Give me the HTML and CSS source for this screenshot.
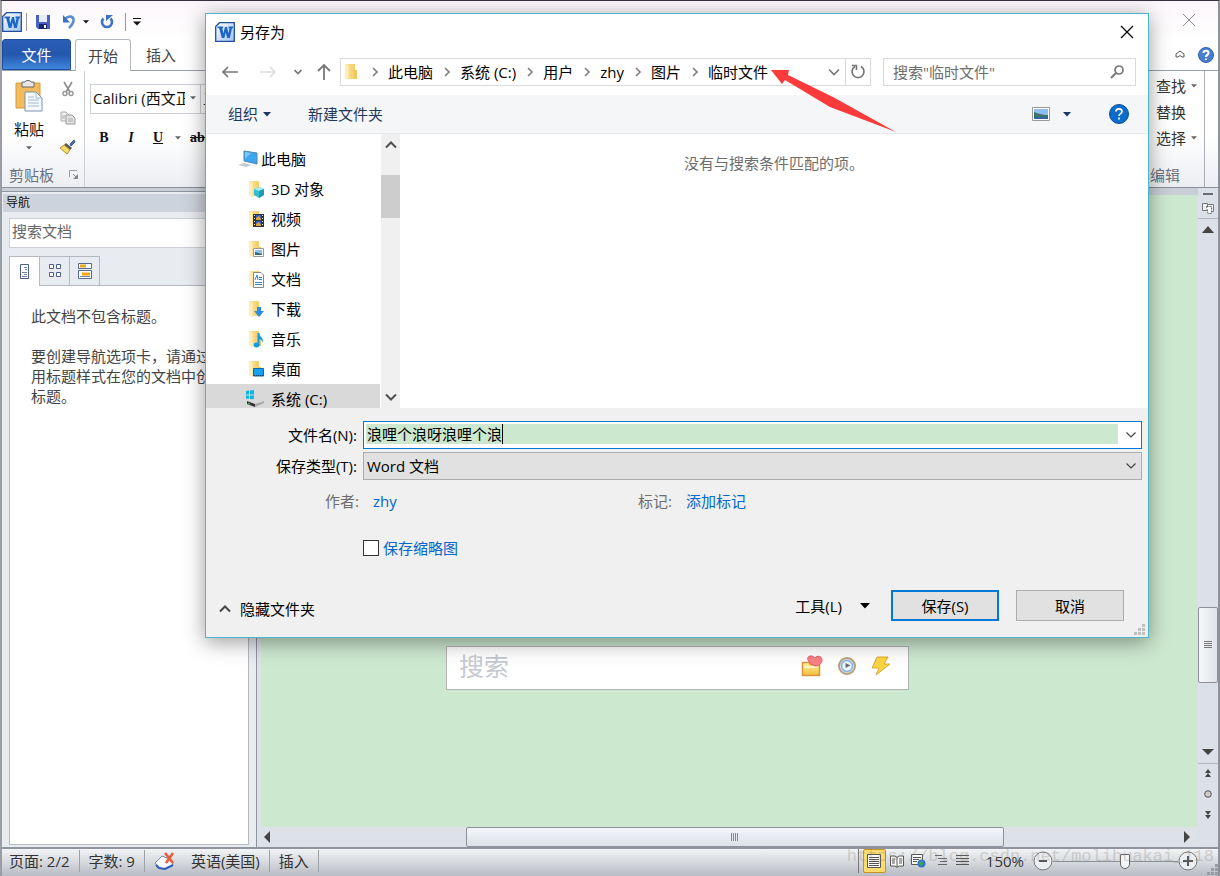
FILE: index.html
```html
<!DOCTYPE html>
<html lang="zh-CN">
<head>
<meta charset="utf-8">
<title>另存为</title>
<link rel="stylesheet" href="styles.css">
</head>
<body>
<svg class="defs" width="0" height="0" aria-hidden="true">
  <defs>
    <linearGradient id="gFolder" x1="0" x2="1"><stop offset="0" stop-color="#fde9a6"/><stop offset="1" stop-color="#f3cb63"/></linearGradient>
    <linearGradient id="gWord" x1="0" y1="0" x2="1" y2="1"><stop offset="0" stop-color="#ffffff"/><stop offset="1" stop-color="#9fc3ee"/></linearGradient>
    <linearGradient id="gGold" x1="0" y1="0" x2="0" y2="1"><stop offset="0" stop-color="#fff3a0"/><stop offset="1" stop-color="#f0bd3c"/></linearGradient>
    <symbol id="word" viewBox="0 0 20 20"><path d="M.7 4.5 4.500.7H19.300V19.300H.7Z" fill="url(#gWord)" stroke="#1f4f9c" stroke-width="1.300"/><path d="M2.500 4.500H8V6.300H7.300L8.300 11.500 10 5H12L13.500 11.500 14.500 6.300H13.500V4.500H18V6.300H17L14.800 16H12.200L10.800 10.500 9.300 16H6.800L4.200 6.300H2.500Z" fill="#1c66c6"/></symbol>
    <symbol id="folder" viewBox="0 0 16 18"><path d="M1 1H11V16H4L1 14Z" fill="url(#gFolder)"/><path d="M1 1 4.500 3V17.500L1 15.500Z" fill="#fdeebb"/><path d="M10 7H13V16H10Z" fill="#f0c75b"/></symbol>
    <symbol id="chev" viewBox="0 0 8 10"><path d="M2 1 6 5 2 9" fill="none" stroke="#808080" stroke-width="1.700"/></symbol>
    <symbol id="down" viewBox="0 0 12 8"><path d="M1 1.500 6 6.500 11 1.500" fill="none" stroke="currentColor" stroke-width="1.600"/></symbol>
    <symbol id="tri" viewBox="0 0 10 6"><path d="M0 0H10L5 5.500Z" fill="currentColor"/></symbol>
  </defs>
</svg>

<div class="app">
  <header class="quick">
    <svg class="i20" aria-label="Word"><use href="#word"/></svg>
    <span class="rule"></span>
    <button class="bare save" aria-label="保存"><svg width="16" height="16" viewBox="0 0 16 16"><path d="M1 1H15V15H3L1 13Z" fill="#4a5fc0"/><path d="M4 1H12V8H4Z" fill="#e6ecfa"/><path d="M4 10H12V15H4Z" fill="#182a6a"/><path d="M9 11H11V14H9Z" fill="#fff"/></svg></button>
    <button class="bare undo" aria-label="撤消"><svg width="16" height="16" viewBox="0 0 16 16"><path d="M4 5C8 1 13 2 12.500 7 12 10 10 12 8 14" fill="none" stroke="#5a8cd4" stroke-width="2.600"/><path d="M2 1V8.500H9Z" fill="#3c72c2"/></svg></button>
    <svg class="tri small" aria-hidden="true"><use href="#tri"/></svg>
    <button class="bare redo" aria-label="重复"><svg width="14" height="14" viewBox="0 0 14 14"><path d="M3.500 3.500A5 5 0 1 0 10.500 3.500" fill="none" stroke="#3f72c6" stroke-width="2.600"/><path d="M6 6V0H13Z" fill="#3f72c6"/></svg></button>
    <span class="rule"></span>
    <svg width="8" height="10" viewBox="0 0 8 10"><path d="M0 1.500H8" stroke="#111"/><path d="M0 4.500H8L4 8.500Z" fill="#111"/></svg>
    <button class="bare winclose" aria-label="关闭"><svg width="14" height="14" viewBox="0 0 14 14"><path d="M1 1 13 13M13 1 1 13" stroke="#8c8c8c"/></svg></button>
  </header>

  <div class="tabs">
    <button class="file">文件</button>
    <button class="tab on">开始</button>
    <button class="tab">插入</button>
    <button class="tab">页面布局</button>
    <span class="tabtools">
      <svg width="10" height="9" viewBox="0 0 10 9"><path d="M1 4 5 1 9 4V7H7L5 5.500 3 7H1Z" fill="#fff" stroke="#555"/></svg>
      <svg width="16" height="16" viewBox="0 0 16 16"><circle cx="8" cy="8" r="7.500" fill="#4a7fd0" stroke="#2f62b3"/><path d="M5.500 6C5.500 3 10.500 3 10.500 6 10.500 8 8 7.800 8 10M8 11.500V13" fill="none" stroke="#fff" stroke-width="2"/></svg>
    </span>
  </div>

  <div class="ribbon">
    <section class="clip">
      <div class="cliprow">
        <button class="bare paste"><svg width="30" height="32" viewBox="0 0 30 32"><path d="M2 3H26V28H2Z" fill="#f2bc5c" stroke="#d49b3c"/><path d="M8 2H11C11 0 17 0 17 2H20V7H8Z" fill="#e6e6e6" stroke="#666"/><path d="M11 12H22L28 18V31H11Z" fill="#f7fbff" stroke="#7891af"/><path d="M22 12V18H28M14 17H20M14 20H25M14 23H25M14 26H25" fill="none" stroke="#9fb6d2"/></svg><span>粘贴</span><svg class="tri small grey"><use href="#tri"/></svg></button>
        <div class="cliptools">
          <button class="bare" aria-label="剪切"><svg width="12" height="16" viewBox="0 0 12 16"><path d="M2 1 8 11M10 1 4 11" stroke="#8c8c8c" stroke-width="1.600"/><circle cx="3" cy="12.500" r="2" fill="none" stroke="#999" stroke-width="1.500"/><circle cx="9" cy="12.500" r="2" fill="none" stroke="#999" stroke-width="1.500"/></svg></button>
          <button class="bare" aria-label="复制"><svg width="16" height="14" viewBox="0 0 16 14"><path d="M1 1H6L9 4V10H1Z" fill="#eee" stroke="#aaa"/><path d="M6 4H12L15 7V13H6Z" fill="#e4e4e4" stroke="#999"/><path d="M8 8H13M8 10H13M2 5H5M2 7H5" stroke="#aaa"/></svg></button>
          <button class="bare" aria-label="格式刷"><svg width="17" height="16" viewBox="0 0 17 16"><path d="M11 5 15 1 16 3 12 7Z" fill="#4c70b4" stroke="#35549a"/><path d="M7 4 13 9 11 11 5 6Z" fill="#555"/><path d="M5 6 11 11 8 15 1 9Z" fill="#f8dd6c" stroke="#b48b2c"/></svg></button>
        </div>
      </div>
      <div class="glabel"><span>剪贴板</span><svg width="10" height="10" viewBox="0 0 10 10"><path d="M.5 7V.5H8" fill="none" stroke="#999"/><path d="M4 4 7 7" stroke="#888"/><path d="M9 4V9H4Z" fill="#888"/></svg></div>
    </section>
    <section class="font">
      <div class="fontrow"><button class="combo"><span>Calibri (西文正文)</span><svg class="tri small grey"><use href="#tri"/></svg></button><button class="combo size"><span>五号</span></button></div>
      <div class="fmt"><button class="bare"><b>B</b></button><button class="bare"><i>I</i></button><button class="bare"><u>U</u></button><svg class="tri small grey"><use href="#tri"/></svg><button class="bare strike"><s>abc</s></button></div>
    </section>
    <section class="edit">
      <button class="bare">查找<svg class="tri small grey"><use href="#tri"/></svg></button>
      <button class="bare">替换</button>
      <button class="bare">选择<svg class="tri small grey"><use href="#tri"/></svg></button>
      <span class="glabel">编辑</span>
    </section>
  </div>

  <div class="work">
    <aside class="pane">
      <h2>导航</h2>
      <input class="find" type="text" placeholder="搜索文档" aria-label="搜索文档">
      <div class="ptabs">
        <button class="on" aria-label="浏览标题"><svg width="10" height="16" viewBox="0 0 10 16"><path d="M.5.5H8.500V14.500H.5Z" fill="#fff" stroke="#4c5f80"/><path d="M4 3.500H7M5 5.500H7M2 8.500H7M4 10.500H7M2 12.500H7" stroke="#7283a0"/></svg></button>
        <button aria-label="浏览页面"><svg width="14" height="16" viewBox="0 0 14 16"><path d="M1.500 1.500H5.500V5.500H1.500ZM8.500 1.500H12.500V5.500H8.500ZM1.500 9.500H5.500V13.500H1.500ZM8.500 9.500H12.500V13.500H8.500Z" fill="#fff" stroke="#49618c"/></svg></button>
        <button aria-label="浏览搜索结果"><svg width="14" height="16" viewBox="0 0 14 16"><path d="M.5.5H13.500V5.500H.5ZM.5 7.500H13.500V15.500H.5Z" fill="#fff" stroke="#566b90"/><path d="M2 3H8M4 11H12" stroke="#f3a81c" stroke-width="3"/><path d="M2 13.500H12" stroke="#7283a0"/></svg></button>
      </div>
      <div class="ptext"><p>此文档不包含标题。</p><p>要创建导航选项卡，请通过应用标题样式在您的文档中创建标题。</p></div>
    </aside>
    <div class="center">
      <main class="canvas">
        <div class="docsearch"><span>搜索</span>
          <svg width="22" height="22" viewBox="0 0 22 22"><path d="M1.500 7.500H8L9.500 9.500H18.500V20.500H1.500Z" fill="url(#gGold)" stroke="#dc9440" stroke-width="1.500"/><path d="M3 12H17" stroke="#fff5c2" stroke-width="2"/><path d="M14 11C8 9 4 2 9 1 12 .5 13 2 14 3 16 0 21 1 21 5 21 9 17 11 14 11Z" fill="#f98085" stroke="#e35b66"/></svg>
          <svg width="20" height="20" viewBox="0 0 20 20"><circle cx="10" cy="10" r="8" fill="#dbe9fb" stroke="#b6a078" stroke-width="2"/><circle cx="10" cy="10" r="5.500" fill="#f2f8ff" stroke="#8db4ea" stroke-width="1.600"/><path d="M8.500 7 13.500 9.500 8.500 12Z" fill="#5c6d80"/></svg>
          <svg width="20" height="20" viewBox="0 0 20 20"><path d="M6 1H17L13 8H19L5 19 8 12H1Z" fill="#f9d443" stroke="#dfa736"/></svg>
        </div>
      </main>
      <div class="hscroll"><svg width="8" height="12" viewBox="0 0 8 12"><path d="M7 0V12L1 6Z" fill="#444"/></svg><span class="h1"></span><span class="hthumb"><svg width="8" height="8" viewBox="0 0 8 8"><path d="M.5 0V8M2.500 0V8M4.500 0V8M6.500 0V8" stroke="#888"/></svg></span><span class="h2"></span><svg width="8" height="12" viewBox="0 0 8 12"><path d="M1 0V12L7 6Z" fill="#444"/></svg></div>
    </div>
    <div class="vscroll">
      <div class="vtop"><span class="split"></span><svg width="12" height="12" viewBox="0 0 12 12"><path d="M.5 1.500H5.500V8.500H.5ZM5.500 2.500H11.500V9.500H5.500Z" fill="#eef1f6" stroke="#777"/><path d="M4.500 4.500H9.500V11.500H6Z" fill="#fff" stroke="#666" stroke-dasharray="2 1"/></svg></div>
      <svg class="vup" width="12" height="7" viewBox="0 0 12 7"><path d="M0 7 6 0 12 7Z" fill="#444"/></svg>
      <span class="v1"></span><span class="vthumb"><svg width="8" height="8" viewBox="0 0 8 8"><path d="M0 .5H8M0 2.500H8M0 4.500H8M0 6.500H8" stroke="#777"/></svg></span><span class="v2"></span>
      <svg class="vdown" width="12" height="7" viewBox="0 0 12 7"><path d="M0 0 6 6 12 0Z" fill="#444"/></svg>
      <div class="vbot">
        <svg width="8" height="8" viewBox="0 0 8 8"><path d="M1 4 4 0 7 4ZM1 8 4 4 7 8Z" fill="#444"/></svg>
        <svg width="8" height="8" viewBox="0 0 8 8"><circle cx="4" cy="4" r="3.300" fill="#ccc" stroke="#555"/></svg>
        <svg width="8" height="8" viewBox="0 0 8 8"><path d="M1 0H7L4 4ZM1 4H7L4 8Z" fill="#444"/></svg>
      </div>
    </div>
  </div>

  <footer class="status">
    <span class="cell">页面: 2/2</span><span class="cell">字数: 9</span>
    <span class="cell lang"><svg width="22" height="20" viewBox="0 0 22 20"><path d="M1 12 8 5 18 9 19 14 11 18 5 17Z" fill="#f7f9fd" stroke="#7d8ba5"/><path d="M2 14 5 17 11 18 19 14" fill="none" stroke="#2f5cb8" stroke-width="2"/><path d="M11 2 19 12M19 2 12 12" stroke="#ee5a3c" stroke-width="2.500"/></svg>英语(美国)</span>
    <span class="cell">插入</span>
    <span class="views">
      <button class="vw on" aria-label="页面视图"><svg width="14" height="14" viewBox="0 0 14 14"><path d="M.5.5H13.500V13.500H.5Z" fill="#fff" stroke="#555"/><path d="M2 3.500H12M2 5.500H12M2 7.500H12M2 9.500H12M2 11.500H12" stroke="#555"/></svg></button>
      <button class="vw" aria-label="阅读版式"><svg width="14" height="13" viewBox="0 0 14 13"><path d="M.5 1H5L7 2.500 9 1H13.500V11H9L7 12.500 5 11H.5Z" fill="#fff" stroke="#555"/><path d="M7 2V12M2 4H5M2 6H5M2 8H5M9 4H12M9 6H12M9 8H12" stroke="#555"/></svg></button>
      <button class="vw" aria-label="Web 版式"><svg width="15" height="14" viewBox="0 0 15 14"><path d="M.5.5H11.500V10.500H.5Z" fill="#fff" stroke="#555"/><path d="M2 3.500H10M2 5.500H8M2 7.500H6" stroke="#555"/><circle cx="10.500" cy="9.500" r="4" fill="#2f78c8"/><path d="M8 8 11 7 12 10 9 12Z" fill="#47a447"/></svg></button>
      <button class="vw" aria-label="大纲"><svg width="12" height="12" viewBox="0 0 12 12"><path d="M0 .5H7M3 3.500H12M5 6.500H12M3 9.500H12" stroke="#666"/></svg></button>
      <button class="vw" aria-label="草稿"><svg width="13" height="12" viewBox="0 0 13 12"><path d="M0 .5H13M0 3.500H13M0 6.500H13M0 9.500H13" stroke="#555"/></svg></button>
    </span>
    <span class="pct">150%</span>
    <button class="rnd" aria-label="缩小"><svg width="20" height="20" viewBox="0 0 20 20"><circle cx="10" cy="10" r="9" fill="#eceef1" stroke="#777"/><path d="M6 10H14" stroke="#555" stroke-width="2"/></svg></button>
    <input class="zoom" type="range" min="0" max="100" value="58" aria-label="缩放">
    <button class="rnd" aria-label="放大"><svg width="20" height="20" viewBox="0 0 20 20"><circle cx="10" cy="10" r="9" fill="#eceef1" stroke="#777"/><path d="M5 10H15M10 5V15" stroke="#555" stroke-width="2"/></svg></button>
    <svg class="grip" width="12" height="12" viewBox="0 0 12 12"><path d="M9 0H12V3H9ZM5 4H8V7H5ZM9 4H12V7H9ZM1 8H4V11H1ZM5 8H8V11H5ZM9 8H12V11H9Z" fill="#969ba5"/></svg>
    <span class="mark">https://blog.csdn.net/molihuakai_118</span>
  </footer>
</div>

<div class="dialog" role="dialog" aria-label="另存为">
  <div class="dtitle"><svg class="i20"><use href="#word"/></svg><h1>另存为</h1><button class="bare" aria-label="关闭"><svg width="14" height="14" viewBox="0 0 14 14"><path d="M1 1 13 13M13 1 1 13" stroke="#000" stroke-width="1.200"/></svg></button></div>
  <div class="dnav">
    <button class="bare" aria-label="后退"><svg width="16" height="12" viewBox="0 0 16 12"><path d="M16 6H1M6 1 1 6 6 11" fill="none" stroke="#777" stroke-width="1.700"/></svg></button>
    <button class="bare fwd" aria-label="前进"><svg width="16" height="12" viewBox="0 0 16 12"><path d="M0 6H15M10 1 15 6 10 11" fill="none" stroke="#ddd" stroke-width="1.700"/></svg></button>
    <button class="bare" aria-label="最近位置"><svg width="8" height="6" viewBox="0 0 8 6"><path d="M.5 1 4 4.500 7.500 1" fill="none" stroke="#777" stroke-width="1.700"/></svg></button>
    <button class="bare up" aria-label="上移"><svg width="14" height="16" viewBox="0 0 14 16"><path d="M7 16V1M1 7 7 1 13 7" fill="none" stroke="#777" stroke-width="1.800"/></svg></button>
    <div class="addr">
      <svg class="fold"><use href="#folder"/></svg>
      <svg class="ch"><use href="#chev"/></svg><span>此电脑</span>
      <svg class="ch"><use href="#chev"/></svg><span>系统 (C:)</span>
      <svg class="ch"><use href="#chev"/></svg><span>用户</span>
      <svg class="ch"><use href="#chev"/></svg><span>zhy</span>
      <svg class="ch"><use href="#chev"/></svg><span>图片</span>
      <svg class="ch"><use href="#chev"/></svg><span>临时文件</span>
      <button class="bare drop" aria-label="以前的位置"><svg width="12" height="8" color="#777"><use href="#down"/></svg></button>
      <button class="bare refresh" aria-label="刷新"><svg width="16" height="16" viewBox="0 0 16 16"><path d="M11 2.500A6 6 0 1 1 5 2.500" fill="none" stroke="#777" stroke-width="1.700"/><path d="M2 1.500H6.500V6" fill="none" stroke="#777" stroke-width="1.600"/></svg></button>
    </div>
    <div class="search"><input type="text" placeholder='搜索"临时文件"' aria-label="搜索"><svg width="14" height="14" viewBox="0 0 14 14"><circle cx="9" cy="5" r="4" fill="none" stroke="#777" stroke-width="1.700"/><path d="M6 8 1 13" stroke="#777" stroke-width="2"/></svg></div>
  </div>
  <div class="dbar">
    <button class="bare">组织<svg class="tri" width="8" height="5"><use href="#tri"/></svg></button>
    <button class="bare newf">新建文件夹</button>
    <button class="bare view" aria-label="更改视图"><svg width="18" height="14" viewBox="0 0 18 14"><path d="M.5.5H17.500V13.500H.5Z" fill="#fff" stroke="#999"/><path d="M2 2H16V12H2Z" fill="#8dbdf4"/><path d="M2 5C6 6 9 8 16 8V12H2Z" fill="#3d7468"/><path d="M2 10H16V12H2Z" fill="#2f66a0"/></svg><svg class="tri" width="8" height="5"><use href="#tri"/></svg></button>
    <button class="bare" aria-label="帮助"><svg width="20" height="20" viewBox="0 0 20 20"><circle cx="10" cy="10" r="9.500" fill="#0a6ccb" stroke="#0b4f93"/><path d="M7 7.500C7 4 13 4 13 7.500 13 9.800 10 9.500 10 12M10 13.500V15.500" fill="none" stroke="#fff" stroke-width="1.700"/></svg></button>
  </div>
  <div class="dbody">
    <ul class="tree">
      <li class="root"><svg width="20" height="18" viewBox="0 0 20 18"><path d="M6 1 19 3V14L6 11Z" fill="#3ba5ee" stroke="#5484a8"/><path d="M7 2 13 3 7 9Z" fill="#7cc8fa"/><path d="M0 15 6 13 14 15 8 17Z" fill="#c5cbd1"/></svg>此电脑</li>
      <li><svg class="fi" viewBox="0 0 16 18"><use href="#folder"/><path d="M6 9 11 7 16 9V15L11 18 6 15Z" fill="#35bcd8"/><path d="M6 9 11 11 16 9 11 7Z" fill="#a5edf5"/><path d="M11 11 16 9V15L11 18Z" fill="#199db9"/></svg>3D 对象</li>
      <li><svg class="fi" viewBox="0 0 16 18"><use href="#folder"/><path d="M5 4H16V17H5Z" fill="#333"/><path d="M8 5H13V10H8ZM8 11H13V16H8Z" fill="#375fc6"/><path d="M8 8 11 6 13 9V10H8ZM8 14 11 12 13 15V16H8Z" fill="#d8a53b"/><path d="M6.500 5V17M14.500 5V17" stroke="#fff" stroke-dasharray="1 2"/></svg>视频</li>
      <li><svg class="fi" viewBox="0 0 16 18"><use href="#folder"/><path d="M5.500 8.500H15.500V16.500H5.500Z" fill="#fff" stroke="#999"/><path d="M7 10H14V15H7Z" fill="#8fc3ef"/><path d="M7 12 14 14V15H7Z" fill="#306a72"/></svg>图片</li>
      <li><svg class="fi" viewBox="0 0 16 18"><use href="#folder"/><path d="M5.500 2.500H13L15.500 5V17.500H5.500Z" fill="#fff" stroke="#888"/><path d="M7 10 9 5 10 10M11 7.500H14M11 9.500H14M7 12.500H14M7 14.500H14" fill="none" stroke="#3486c5"/></svg>文档</li>
      <li><svg class="fi" viewBox="0 0 16 18"><use href="#folder"/><path d="M9 7H13V11H16L11 17 6 11H9Z" fill="#2f8be0"/></svg>下载</li>
      <li><svg class="fi" viewBox="0 0 16 18"><use href="#folder"/><path d="M10.500 3V15" stroke="#109be9" stroke-width="2"/><path d="M11 3C11 7 16 7 15 13 14 9 11 9 11 9Z" fill="#109be9"/><ellipse cx="8.500" cy="15" rx="3" ry="2.500" fill="#109be9"/></svg>音乐</li>
      <li><svg class="fi" viewBox="0 0 16 18"><use href="#folder"/><path d="M5.500 8.500H15.500V16H5.500Z" fill="#14a2f4" stroke="#0d67a8"/><path d="M6 15.500H15" stroke="#0b416d" stroke-dasharray="1 1"/></svg>桌面</li>
      <li class="sel"><svg width="20" height="18" viewBox="0 0 20 18"><path d="M1 1 4 .5V4.500H1ZM5 .5 9 0V4.500H5ZM1 5.500H4V9L1 8.500ZM5 5.500H9V10L5 9Z" fill="#0cb4ee"/><path d="M2 11 11 8 19 11 10 14Z" fill="#d7d9dc"/><path d="M2 11 10 14V17L2 14Z" fill="#333"/><path d="M10 14 19 11V13L10 17Z" fill="#aaa"/><path d="M3 13 5 14" stroke="#38d45c"/></svg>系统 (C:)</li>
    </ul>
    <div class="tscroll"><svg width="12" height="8" viewBox="0 0 12 8"><path d="M1 6.500 6 1.500 11 6.500" fill="none" stroke="#505050" stroke-width="2"/></svg><span></span><svg width="12" height="8" viewBox="0 0 12 8"><path d="M1 1.500 6 6.500 11 1.500" fill="none" stroke="#505050" stroke-width="2"/></svg></div>
    <div class="list">没有与搜索条件匹配的项。</div>
  </div>
  <form class="dform">
    <label for="fname">文件名(N):</label>
    <div class="name"><input id="fname" type="text" value="浪哩个浪呀浪哩个浪"><span class="caret"></span><svg width="12" height="8" viewBox="0 0 12 8"><path d="M1.500 1.500 6 6 10.500 1.500" fill="none" stroke="#444" stroke-width="1.200"/></svg></div>
    <label for="ftype">保存类型(T):</label>
    <div class="type"><select id="ftype"><option>Word 文档</option></select><svg width="12" height="8" viewBox="0 0 12 8"><path d="M1.500 1.500 6 6 10.500 1.500" fill="none" stroke="#444" stroke-width="1.200"/></svg></div>
    <span class="meta">作者:</span>
    <div class="metas"><a href="#">zhy</a><span class="meta">标记:</span><a href="#">添加标记</a></div>
    <label class="thumb"><input type="checkbox">保存缩略图</label>
  </form>
  <div class="dfoot">
    <button class="bare hide"><svg width="12" height="8" viewBox="0 0 12 8"><path d="M1 6.500 6 1.500 11 6.500" fill="none" stroke="#444" stroke-width="2"/></svg>隐藏文件夹</button>
    <button class="bare tools">工具(L)<svg class="tri wide"><use href="#tri"/></svg></button>
    <button class="btn primary">保存(S)</button>
    <button class="btn">取消</button>
  </div>
  <svg class="dgrip" width="12" height="12" viewBox="0 0 12 12"><path d="M8 0H11V3H8ZM4 4H7V7H4ZM8 4H11V7H8ZM0 8H3V11H0ZM4 8H7V11H4ZM8 8H11V11H8Z" fill="#bfbfbf"/></svg>
  <svg class="arrow" width="128" height="64" viewBox="0 0 128 64"><path d="M1 0 19 0 18 5 63 27 126 62 60 37 15 10 12 14Z" fill="#fb3b3b"/></svg>
</div>
</body>
</html>
```
FILE: styles.css
```css
* { box-sizing: border-box; }
body { margin: 0; font: 15px/20px "Open Sans", "Noto Sans CJK SC", sans-serif; color: #111; overflow: hidden; }
svg { display: block; flex: none; }
button, input, select { font: inherit; color: inherit; }
h1, h2, p, ul { margin: 0; padding: 0; font-weight: 400; }
.defs { position: absolute; }
.bare { background: none; border: 0; padding: 0; display: flex; align-items: center; white-space: nowrap; }
.i20 { width: 20px; height: 20px; }
.tri { width: 8px; height: 5px; }
.tri.small { width: 6px; height: 4px; }
.tri.wide { width: 10px; height: 6px; }
.grey { color: #666; }

.app { height: 100vh; display: flex; flex-direction: column; border-top: 1px solid #35303f; border-left: 2px solid #9a9da3; border-right: 2px solid #8f9299; background: #fff; }
.quick { flex: none; height: 38px; display: flex; align-items: center; gap: 8px; padding: 4px 22px 0 0; background: linear-gradient(#fbf6fa, #fff); }
.quick .rule { width: 1px; height: 18px; background: #999; margin: 0 -1px 0 -4px; }
.quick .save { margin-left: 1px; }
.quick .undo { margin-left: 2px; }
.quick .undo + .tri { margin-left: -2px; }
.quick .redo { margin: 0 7px 0 3px; }
.winclose { margin: -4px 0 0 auto; }
.tabs { flex: none; height: 32px; display: flex; align-items: stretch; border-bottom: 1px solid #999fab; }
.tabs button { border: 0; padding: 0; background: none; color: #444; }
.tabs .file { width: 69px; background: linear-gradient(#2b5fb8, #2458ad 50%, #3f86de); border: 1px solid #1f4d9c; border-radius: 3px 3px 0 0; color: #fff; }
.tabs .tab { padding: 0 15px; }
.tabs .on { margin: 0 0 -1px 4px; padding: 0 12px; background: #fff; border: 1px solid #b4b8c0; border-bottom: 0; border-radius: 3px 3px 0 0; }
.tabtools { margin-left: auto; display: flex; align-items: center; gap: 13px; padding-right: 4px; }

.ribbon { flex: none; height: 117px; display: flex; background: linear-gradient(#fff 55%, #eceef2); border-bottom: 1px solid #898e98; }
.clip { width: 83px; display: flex; flex-direction: column; border-right: 1px solid #ccd0d6; }
.cliprow { flex: 1; display: flex; padding: 9px 8px 0 12px; justify-content: space-between; }
.paste { flex-direction: column; gap: 7px; align-self: flex-start; }
.cliptools { display: flex; flex-direction: column; align-items: center; gap: 14px; padding-top: 1px; }
.glabel { display: flex; align-items: center; color: #6a717d; gap: 15px; padding: 0 0 2px 7px; }
.font { padding: 13px 0 0 5px; }
.fontrow { display: flex; }
.combo { width: 111px; height: 30px; display: flex; align-items: center; background: #fff; border: 1px solid #ccd0d6; padding: 0 4px 3px 2px; text-align: left; gap: 5px; }
.combo span { flex: 1; overflow: hidden; white-space: nowrap; }
.combo.size { width: 50px; border-left: 0; }
.fmt { display: flex; align-items: center; gap: 11px; padding: 14px 0 0 8px; font: 14px/20px "Liberation Serif", serif; }
.fmt .bare { min-width: 12px; justify-content: center; font-weight: 700; }
.fmt .bare + .bare { margin-left: 4px; }
.fmt .strike { margin-left: -2px; }
.edit { margin-left: auto; width: 57px; margin-right: 13px; border-right: 1px solid #a9aeb8; padding-top: 5px; display: flex; flex-direction: column; gap: 6px; }
.edit .bare { padding-left: 8px; gap: 5px; color: #333; }
.edit .glabel { margin-top: auto; padding-left: 2px; }

.work { flex: 1; min-height: 0; display: flex; background: #c9ced7; border-bottom: 2px solid #8f949e; }
.pane { width: 255px; margin-top: 3px; flex: none; display: flex; flex-direction: column; background: #e8ebf0; border: 1px solid #8f949e; border-width: 1px 1px 0 0; padding: 2px 7px 2px; }
.pane h2 { margin: 0 -6px; padding-left: 3px; background: #cdd3dc; font-size: 12px; line-height: 18px; }
.find { margin: 6px 0 8px; height: 30px; border: 1px solid #ccd0d6; padding: 0 2px 4px; background: #fff; }
.find::placeholder { color: #666; opacity: 1; }
.ptabs { display: flex; border-bottom: 1px solid #b3b8c1; height: 30px; }
.ptabs button { width: 30px; padding: 0; display: flex; align-items: center; justify-content: center; border: 1px solid #b3b8c1; border-left: 0; border-bottom: 0; background: #e8ebf0; }
.ptabs .on { width: 31px; height: 30px; border-left: 1px solid #b3b8c1; background: #fff; }
.ptext { flex: 1; background: #fff; border: 1px solid #b3b8c1; border-top: 0; padding: 20px 12px 0 21px; color: #444; }
.ptext p { margin-bottom: 20px; }
.center { flex: 1; min-width: 0; display: flex; flex-direction: column; padding-top: 7px; border-left: 4px solid #dde1e8; }
.canvas { flex: 1; min-height: 0; background: #cce8cf; padding: 451px 289px 0 185px; }
.docsearch { height: 44px; background: #fff; border: 1px solid #b3b3b3; display: flex; align-items: center; gap: 14px; padding: 0 17px 4px 12px; }
.docsearch span { flex: 1; font-size: 25px; line-height: 30px; color: #c5c9d1; }
.hscroll { height: 20px; display: flex; align-items: center; background: #dde1e8; padding: 0 7px 0 2px; gap: 7px; }
.h1 { flex: 182; } .h2 { flex: 166; }
.hthumb { flex: 538; height: 20px; border: 1px solid #8c919b; border-radius: 2px; background: linear-gradient(#f3f5f8, #dde1e8); display: flex; align-items: center; justify-content: center; }
.vscroll { width: 20px; flex: none; display: flex; flex-direction: column; align-items: center; background: #dce0e8; padding-top: 5px; }
.vtop { width: 100%; display: flex; flex-direction: column; align-items: center; gap: 7px; height: 26px; border-bottom: 1px solid #b1b6c0; }
.split { width: 10px; height: 2px; background: #666c78; }
.vup { margin: 7px 0; }
.v1 { flex: 368; } .v2 { flex: 59; }
.vthumb { flex: 74; width: 20px; border: 1px solid #8c919b; border-radius: 2px; background: linear-gradient(90deg, #f6f7fa, #dfe3ea); display: flex; align-items: center; justify-content: center; }
.vdown { margin: 7px 0; }
.vbot { width: 100%; height: 84px; border-top: 1px solid #b1b6c0; padding-top: 5px; display: flex; flex-direction: column; align-items: center; gap: 13px; }

.status { position: relative; flex: none; height: 27px; display: flex; align-items: center; padding-bottom: 3px; background: linear-gradient(#f2f4f6, #b8bcc3); color: #333; white-space: nowrap; }
.cell { display: flex; align-items: center; gap: 15px; height: 22px; padding: 0 9px; border-right: 1px solid #9ba0a9; }
.cell:first-child { padding-left: 7px; }
.views { margin-left: auto; display: flex; align-items: center; height: 24px; border-left: 1px solid #777; padding-left: 4px; }
.vw { width: 22px; height: 22px; padding: 0; display: flex; align-items: center; justify-content: center; border: 0; background: none; }
.vw.on { height: 24px; width: 23px; border: 1px solid #c99320; border-radius: 2px; background: #fddc6e; }
.pct { margin: 0 9px 0 12px; }
.rnd { border: 0; background: none; padding: 0; }
.zoom { appearance: none; width: 125px; height: 20px; margin: 0; background: linear-gradient(#8a8f98, #8a8f98) center / 100% 1px no-repeat; }
.zoom::-webkit-slider-thumb { appearance: none; width: 10px; height: 15px; border: 1px solid #666; border-radius: 1px 1px 5px 5px; background: #f4f5f7; }
.grip { margin: 0 0 -3px 8px; align-self: flex-end; }
.mark { position: absolute; right: 4px; top: -2px; font: 17px/20px "Liberation Mono", monospace; color: #8a8676; opacity: 0.3; pointer-events: none; }

.dialog { position: absolute; left: 205px; right: 71px; top: 13px; border: 1px solid #4ab6c9; background: #f0f0f0; box-shadow: 0 4px 20px rgba(0, 0, 0, 0.4); color: #000; }
.dtitle { display: flex; align-items: center; gap: 5px; height: 36px; padding: 0 14px 0 9px; background: #fff; }
.dtitle h1 { flex: 1; font-size: 15px; }
.dnav { display: flex; align-items: center; height: 45px; padding: 0 12px 1px 16px; background: #fff; }
.dnav .fwd { margin: 0 18px 0 22px; }
.dnav .up { margin: 0 9px 0 15px; }
.addr { flex: 1; min-width: 0; height: 28px; border: 1px solid #d9d9d9; display: flex; align-items: center; white-space: nowrap; }
.fold { width: 16px; height: 18px; margin: 0 1px 0 3px; }
.ch { width: 8px; height: 10px; margin: 0 9px 0 10px; }
.addr .drop { margin: 0 5px 0 auto; }
.refresh { height: 26px; padding: 0 4px; border-left: 1px solid #d9d9d9; }
.search { width: 253px; height: 28px; margin-left: 12px; border: 1px solid #d9d9d9; display: flex; align-items: center; padding: 0 11px 0 9px; }
.search input { flex: 1; min-width: 0; border: 0; padding: 0; background: none; outline: 0; }
.search input::placeholder { color: #6d6d6d; opacity: 1; }
.dbar { display: flex; align-items: center; height: 39px; padding: 0 19px 0 22px; background: #f4f6f8; border-bottom: 1px solid #e6e8eb; color: #1e395b; }
.dbar .bare { gap: 5px; }
.dbar .newf { margin-left: 37px; }
.dbar .view { gap: 13px; margin: 0 38px 0 auto; }
.dbody { display: flex; height: 274px; background: #fff; overflow: hidden; }
.tree { width: 174px; list-style: none; padding-top: 10px; }
.tree li { height: 30px; display: flex; align-items: center; padding-left: 42px; gap: 7px; white-space: nowrap; }
.tree .root { padding-left: 32px; gap: 3px; }
.tree .sel { background: #d9d9d9; padding-left: 39px; gap: 6px; }
.fi { width: 16px; height: 18px; }
.tscroll { width: 19px; margin-left: 1px; background: #f0f0f0; display: flex; flex-direction: column; align-items: center; padding: 7px 0; }
.tscroll span { width: 19px; height: 43px; margin: 26px 0 auto; background: #cdcdcd; }
.list { flex: 1; padding-top: 19px; text-align: center; color: #6d6d6d; }
.dform { display: grid; grid-template-columns: 151px 1fr; column-gap: 6px; row-gap: 3px; align-items: center; padding: 13px 6px 0 0; }
.dform > label { text-align: right; }
.name, .type { position: relative; height: 28px; display: flex; align-items: center; background: #fff; border: 1px solid #0078d7; padding: 0 4px 0 2px; }
.name input { flex: 1; min-width: 0; height: 20px; border: 0; padding: 0 1px; background: #cce8cf; margin: 0 7px 2px 0; outline: 0; }
.caret { position: absolute; left: 138px; top: 2px; width: 1px; height: 20px; background: #000; }
.type { background: #e1e1e1; border-color: #adadad; padding-left: 3px; }
.type select { flex: 1; appearance: none; border: 0; padding: 0; background: none; outline: 0; }
.meta { color: #6d6d6d; }
.dform > .meta { text-align: right; margin-right: -2px; }
.dform > .meta, .metas { padding-bottom: 2px; }
.metas { height: 37px; display: grid; grid-template-columns: 265px 48px 1fr; align-items: center; padding-left: 10px; }
.metas a, .thumb { color: #0066cc; text-decoration: none; }
.dform .thumb { grid-column: 2; display: flex; align-items: center; gap: 4px; text-align: left; height: 50px; }
.thumb input { appearance: none; width: 16px; height: 16px; margin: 0; border: 1px solid #333; background: #fff; }
.dfoot { display: flex; align-items: center; height: 64px; padding: 1px 24px 0 13px; }
.hide { gap: 9px; padding-top: 7px; }
.tools { margin: 0 21px 0 auto; gap: 18px; }
.btn { width: 108px; height: 31px; padding: 0; background: #e1e1e1; border: 1px solid #adadad; }
.btn + .btn { margin-left: 17px; }
.primary { border: 2px solid #0078d7; }
.dgrip { position: absolute; right: 2px; bottom: 1px; }
.arrow { position: absolute; left: 564px; top: 56px; }
```
